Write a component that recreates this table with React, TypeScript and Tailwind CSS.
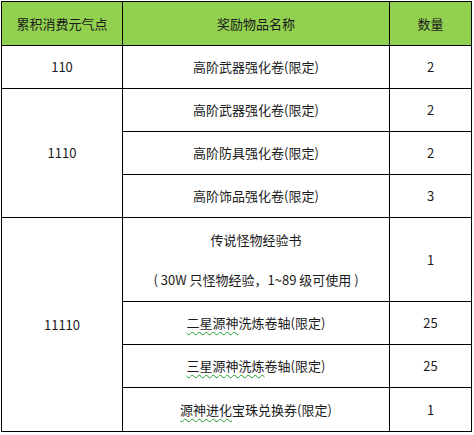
const font = { fontFamily: '"Noto Sans CJK SC", "Noto Sans", sans-serif' };

const Wavy = ({ children }: { children: React.ReactNode }) => (
  <span className="underline decoration-wavy decoration-[#1f9a2a] decoration-1 underline-offset-[3px]">
    {children}
  </span>
);

const td = "border border-black text-center align-middle p-0";

export default function App() {
  return (
    <div className="bg-white w-[474px] h-[435px] pt-px pl-px" style={font}>
      <table className="border-collapse text-[13px] text-[#1a1a1a] table-fixed w-[470px]">
        <colgroup>
          <col className="w-[121px]" />
          <col className="w-[267px]" />
          <col className="w-[82px]" />
        </colgroup>
        <thead>
          <tr className="h-[44px] bg-[#92d050]">
            <th className={`${td} font-normal`}>累积消费元气点</th>
            <th className={`${td} font-normal`}>奖励物品名称</th>
            <th className={`${td} font-normal`}>数量</th>
          </tr>
        </thead>
        <tbody>
          <tr className="h-[43px]">
            <td className={td}>110</td>
            <td className={td}>高阶武器强化卷(限定)</td>
            <td className={td}>2</td>
          </tr>
          <tr className="h-[43px]">
            <td className={td} rowSpan={3}>1110</td>
            <td className={td}>高阶武器强化卷(限定)</td>
            <td className={td}>2</td>
          </tr>
          <tr className="h-[43px]">
            <td className={td}>高阶防具强化卷(限定)</td>
            <td className={td}>2</td>
          </tr>
          <tr className="h-[43px]">
            <td className={td}>高阶饰品强化卷(限定)</td>
            <td className={td}>3</td>
          </tr>
          <tr className="h-[84px]">
            <td className={td} rowSpan={4}>11110</td>
            <td className={`${td} leading-[20px]`}>
              <div>传说怪物经验书</div>
              <div>&nbsp;</div>
              <div>( 30W 只怪物经验，1~89 级可使用 )</div>
            </td>
            <td className={td}>1</td>
          </tr>
          <tr className="h-[43px]">
            <td className={td}>
              <Wavy>二星源神</Wavy>洗炼卷轴(限定)
            </td>
            <td className={td}>25</td>
          </tr>
          <tr className="h-[43px]">
            <td className={td}>
              <Wavy>三星源神洗炼</Wavy>卷轴(限定)
            </td>
            <td className={td}>25</td>
          </tr>
          <tr className="h-[44px]">
            <td className={td}>
              <Wavy>源神进化</Wavy>宝珠兑换券(限定)
            </td>
            <td className={td}>1</td>
          </tr>
        </tbody>
      </table>
    </div>
  );
}
